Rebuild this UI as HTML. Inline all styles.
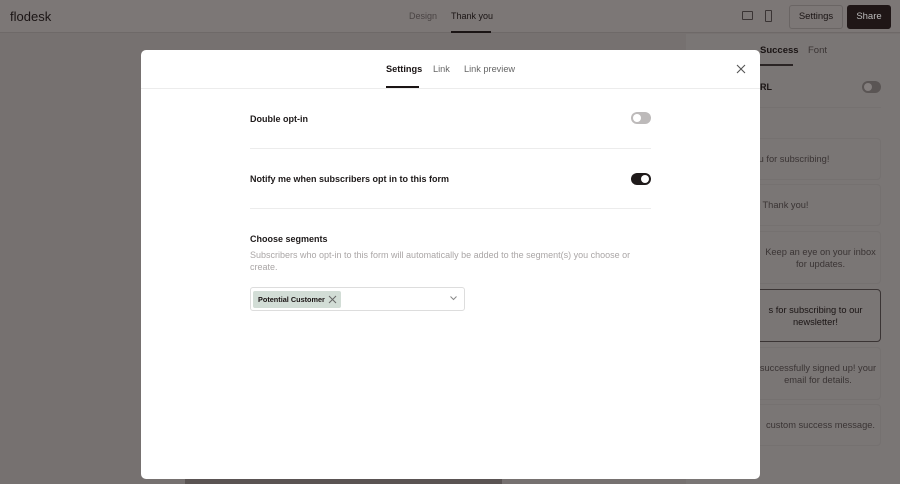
<!DOCTYPE html>
<html><head><meta charset="utf-8"><style>
*{box-sizing:border-box;margin:0;padding:0}
body{width:900px;height:484px;overflow:hidden;font-family:"Liberation Sans",sans-serif;background:#767170;position:relative;color:#1a1414}
.top{position:absolute;left:0;top:0;width:900px;height:33px;background:#7c7776;border-bottom:1px solid #6e6968}
.abs{position:absolute}
.right{position:absolute;left:686px;top:34px;width:214px;height:450px;background:#7a7675}
.card{position:absolute;left:690px;width:191px;border:1px solid #757170;border-radius:4px;font-size:9.3px;color:#3a3434;text-align:center}
.modal{position:absolute;left:141px;top:50px;width:619px;height:429px;background:#fff;border-radius:5px}
.lbl{position:absolute;left:109px;font-size:9px;font-weight:bold;color:#1e1a1a}
.hr{position:absolute;left:109px;width:401px;height:1px;background:#ececec}
.tog{position:absolute;left:490px;width:20px;height:12px;border-radius:6px}
.tog i{position:absolute;top:2px;width:8px;height:8px;border-radius:50%;background:#fff}
</style></head><body>
<div class="top">
<div class="abs" style="left:10px;top:9px;font-size:13px;color:#1a1414">flodesk</div>
<div class="abs" style="left:409px;top:11px;font-size:9px;color:#4a4444">Design</div>
<div class="abs" style="left:451px;top:11px;font-size:9px;color:#1a1414">Thank you</div>
<div class="abs" style="left:451px;top:31px;width:40px;height:2px;background:#1a1414"></div>
<div class="abs" style="left:742px;top:11px;width:11px;height:9px;border:1px solid #3a3434;border-radius:1px"></div>
<div class="abs" style="left:765px;top:10px;width:7px;height:12px;border:1px solid #3a3434;border-radius:1px"></div>
<div class="abs" style="left:789px;top:5px;width:54px;height:24px;border:1px solid #6a6564;border-radius:3px;font-size:9.5px;text-align:center;line-height:22px">Settings</div>
<div class="abs" style="left:847px;top:5px;width:44px;height:24px;background:#1f1616;border-radius:3px;font-size:9.5px;color:#bbb;text-align:center;line-height:24px">Share</div>
</div>
<div class="right"></div>
<div class="abs" style="left:760px;top:45px;font-size:9.5px;font-weight:bold;color:#1a1414">Success</div>
<div class="abs" style="left:808px;top:45px;font-size:9.5px;color:#3a3434">Font</div>
<div class="abs" style="left:760px;top:64px;width:33px;height:2px;background:#2a2424"></div>
<div class="abs" style="left:760px;top:82px;font-size:9px;font-weight:bold">RL</div>
<div class="abs" style="left:862px;top:81px;width:19px;height:12px;border-radius:6px;background:#5a5554"><i style="position:absolute;left:2px;top:2px;width:8px;height:8px;border-radius:50%;background:#847f7e"></i></div>
<div class="abs" style="left:690px;top:107px;width:191px;height:1px;background:#757170"></div>
<div class="card" style="top:138px;height:42px;line-height:40px">k you for subscribing!</div>
<div class="card" style="top:184px;height:42px;line-height:40px">Thank you!</div>
<div class="card" style="top:231px;height:53px;padding-top:14px;line-height:12px;padding-left:70px">Keep an eye on your inbox for updates.</div>
<div class="card" style="top:289px;height:53px;padding-top:14px;line-height:12px;border-color:#3a3434;color:#1a1414;padding-left:60px">s for subscribing to our newsletter!</div>
<div class="card" style="top:347px;height:53px;padding-top:14px;line-height:12px;padding-left:65px">successfully signed up! your email for details.</div>
<div class="card" style="top:404px;height:42px;line-height:40px;padding-left:70px">custom success message.</div>
<div class="abs" style="left:185px;top:478px;width:317px;height:6px;background:#5a5453"></div>
<div class="modal">
<div class="abs" style="left:245px;top:14px;font-size:9.2px;font-weight:bold">Settings</div>
<div class="abs" style="left:292px;top:14px;font-size:9.2px;color:#666">Link</div>
<div class="abs" style="left:323px;top:14px;font-size:9.2px;color:#666">Link preview</div>
<div class="abs" style="left:245px;top:36px;width:33px;height:2px;background:#1a1414"></div>
<svg class="abs" style="left:595px;top:14px" width="10" height="10"><path d="M1 1L9 9M9 1L1 9" stroke="#555" stroke-width="1.1"/></svg>
<div class="abs" style="left:0;top:38px;width:619px;height:1px;background:#ececec"></div>
<div class="lbl" style="top:64px">Double opt-in</div>
<div class="tog" style="top:62px;background:#bdbaba"><i style="left:2px"></i></div>
<div class="hr" style="top:98px"></div>
<div class="lbl" style="top:124px">Notify me when subscribers opt in to this form</div>
<div class="tog" style="top:123px;background:#1f1a1a"><i style="left:10px"></i></div>
<div class="hr" style="top:158px"></div>
<div class="lbl" style="top:184px">Choose segments</div>
<div class="abs" style="left:109px;top:199px;width:400px;font-size:9px;line-height:12px;color:#aaa6a6">Subscribers who opt-in to this form will automatically be added to the segment(s) you choose or create.</div>
<div class="abs" style="left:109px;top:237px;width:215px;height:24px;border:1px solid #ddd;border-radius:3px">
<div class="abs" style="left:2px;top:3px;width:88px;height:17px;background:#d2ddd6;border-radius:2px;font-size:7.3px;font-weight:bold;line-height:17px;padding-left:5px">Potential Customer</div>
<svg class="abs" style="left:77px;top:7px" width="9" height="9"><path d="M1 1L8 8M8 1L1 8" stroke="#666" stroke-width="1"/></svg>
<svg class="abs" style="left:199px;top:8px" width="7" height="5"><path d="M0.5 0.5L3.5 3.5L6.5 0.5" stroke="#888" fill="none"/></svg>
</div>
</div>
</body></html>
